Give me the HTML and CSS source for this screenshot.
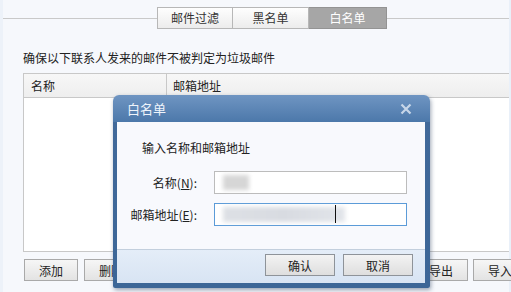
FILE: index.html
```html
<!DOCTYPE html>
<html lang="zh-CN">

<head>
  <meta charset="UTF-8" />
  <title>白名单</title>
  <link rel="stylesheet" href="styles.css">
</head>

<body>
  <div class="page">
    <div class="tabbar">
      <div class="tab">邮件过滤</div>
      <div class="tab">黑名单</div>
      <div class="tab active">白名单</div>
    </div>

    <p class="desc">确保以下联系人发来的邮件不被判定为垃圾邮件</p>

    <div class="list">
      <div class="list-head">
        <div class="col-name">名称</div>
        <div class="col-mail">邮箱地址</div>
      </div>
      <div class="list-body"></div>
    </div>

    <div class="toolbar">
      <div class="group">
        <button class="btn">添加</button>
        <button class="btn">删除</button>
      </div>
      <div class="group">
        <button class="btn">导出</button>
        <button class="btn">导入</button>
      </div>
    </div>
  </div>

  <!-- 弹出对话框 -->
  <div class="dialog">
    <div class="dialog-title">
      <span>白名单</span>
      <svg class="close" width="12" height="12" viewBox="0 0 12 12">
        <path d="M1.5 1.5 L10.5 10.5 M10.5 1.5 L1.5 10.5" stroke="#c7d6e8" stroke-width="2.2" fill="none" />
      </svg>
    </div>
    <div class="dialog-body">
      <p class="intro">输入名称和邮箱地址</p>
      <div class="form">
        <label>名称(<u>N</u>):</label>
        <div class="field"><span class="blur short"></span></div>
        <label>邮箱地址(<u>E</u>):</label>
        <div class="field focus"><span class="blur long"></span><span class="caret"></span></div>
      </div>
    </div>
    <div class="dialog-foot">
      <button class="dbtn">确认</button>
      <button class="dbtn">取消</button>
    </div>
  </div>
</body>

</html>
```

FILE: styles.css
```css
body {
  margin: 0;
  height: 292px;
  overflow: hidden;
  background: #f6f8fc;
  font-family: "Noto Sans CJK SC", "Noto Sans", sans-serif;
  font-size: 12px;
  color: #222;
}

.page {
  height: 292px;
  border-left: 3px solid #edf2f9;
  border-right: 2px solid #e9f0f9;
  padding-top: 7px;
  box-sizing: border-box;
}

.tabbar {
  display: flex;
  height: 22px;
  padding-left: 154px;
  background: linear-gradient(#c9c9c9, #c9c9c9) 0 11px / 100% 1px no-repeat;
}

.tab {
  width: 76px;
  height: 22px;
  box-sizing: border-box;
  border: 1px solid #b7b7b7;
  border-left: none;
  background: linear-gradient(#fefefe, #ececec);
  color: #333;
  text-align: center;
  line-height: 20px;
}

.tab:first-child {
  border-left: 1px solid #b7b7b7;
}

.tab.active {
  width: 78px;
  background: #a6a6a6;
  border-color: #939393;
  color: #fff;
}

.desc {
  margin: 21px 0 0 20px;
  line-height: 16px;
}

.list {
  margin: 7px 0 0 20px;
  height: 179px;
  border: 1px solid #c8c8c8;
  border-right: none;
  background: #fff;
  box-sizing: border-box;
}

.list-head {
  display: flex;
  height: 24px;
  line-height: 23px;
  border-bottom: 1px solid #c8c8c8;
  background: linear-gradient(#f7f7f7, #eeeeee);
  box-sizing: border-box;
}

.col-name {
  width: 143px;
  padding-left: 7px;
  border-right: 1px solid #c8c8c8;
  box-sizing: border-box;
}

.col-mail {
  padding-left: 6px;
}

.toolbar {
  display: flex;
  justify-content: space-between;
  width: 503px;
  margin: 7px 0 0 21px;
}

.group {
  display: flex;
  gap: 5px;
}

.group:first-child {
  gap: 6px;
}

.btn {
  width: 54px;
  height: 22px;
  padding: 0;
  border: 1px solid #a9a9a9;
  background: linear-gradient(#f6f6f6, #e3e3e3);
  font-family: inherit;
  font-size: 12px;
  color: #222;
}

/* 对话框 */
.dialog {
  position: absolute;
  left: 113px;
  top: 95px;
  width: 317px;
  height: 193px;
  box-sizing: border-box;
  padding: 0 5px 5px 4px;
  border-radius: 6px 6px 2px 2px;
  background: linear-gradient(#6f95c2, #4c78aa 27px, #41699a 27px, #3c6697);
  box-shadow: 1px 2px 4px rgba(40, 60, 90, 0.45);
  display: flex;
  flex-direction: column;
}

.dialog-title {
  display: flex;
  justify-content: space-between;
  align-items: center;
  height: 27px;
  padding: 0 13px 0 10px;
  color: #eef4fb;
  font-size: 13px;
}

.close {
  margin-top: 1px;
}

.dialog-body {
  height: 128px;
  box-sizing: border-box;
  padding-top: 18px;
  background: #f8f9fd;
  border-bottom: 1px solid #c3cfdd;
}

.intro {
  margin: 0 0 15px 25px;
  line-height: 16px;
}

.form {
  display: grid;
  grid-template-columns: 80px 193px;
  column-gap: 17px;
  row-gap: 9px;
  align-items: center;
}

.form label {
  text-align: right;
}

.field {
  position: relative;
  height: 23px;
  box-sizing: border-box;
  border: 1px solid #bcbcbc;
  background: #fff;
  padding: 3px 0 0 8px;
}

.field.focus {
  border-color: #5b9bd8;
}

.blur {
  display: inline-block;
  height: 15px;
  filter: blur(2px);
}

.blur.short {
  width: 26px;
  background: #d6d6d6;
}

.blur.long {
  width: 122px;
  background: linear-gradient(90deg, #dde0e5, #d8dbe1 50%, #e2e5ea);
}

.caret {
  position: absolute;
  left: 120px;
  top: 1px;
  width: 1px;
  height: 18px;
  background: #111;
}

.dialog-foot {
  flex: 1;
  display: flex;
  justify-content: flex-end;
  gap: 8px;
  padding: 4px 12px 0 0;
  background: linear-gradient(#e4edf8, #d8e4f3);
}

.dbtn {
  width: 70px;
  height: 22px;
  padding: 0;
  border: 1px solid #8e9399;
  background: linear-gradient(#f3f3f3, #dedede);
  font-family: inherit;
  font-size: 12px;
  color: #222;
}
```
